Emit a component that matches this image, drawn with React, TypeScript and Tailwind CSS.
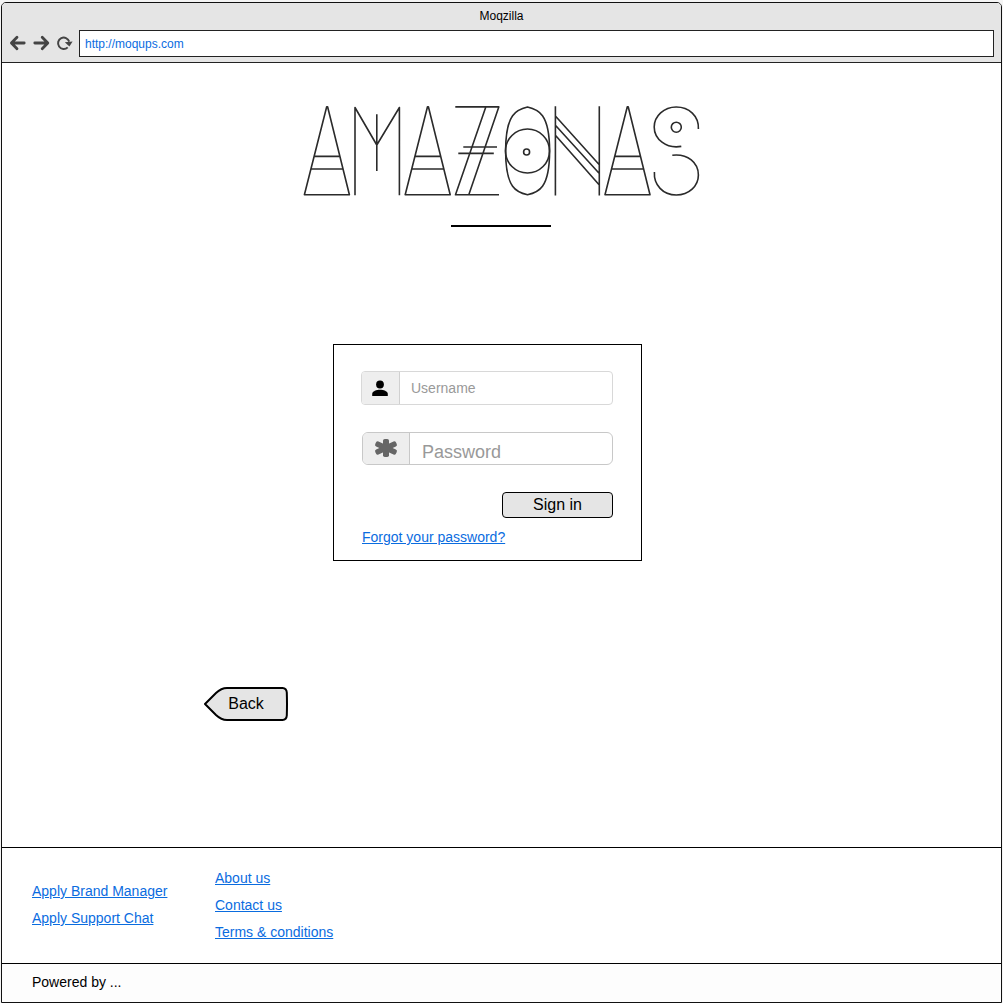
import React from 'react';

const letterA = (x: number) => (
  <path d={`M${x + 22.3} 106.8h.9L${x + 45} 194.7H${x}zM${x + 9.8} 156.4H${x + 35.2}M${x + 6.6} 169H${x + 38.4}`} />
);

function Logo() {
  return (
    <svg
      className="mt-[41px] ml-[300px] block h-[94px] w-[402px]"
      viewBox="302 104 402 94"
      fill="none"
      stroke="#2b2b2b"
      strokeWidth="1.6"
      strokeLinejoin="round"
      role="img"
      aria-label="Amazonas"
    >
      {letterA(304.4)}
      <path d="M355 195.3V107.5L376.8 145 399.4 107.5V195.3M376.8 114.3V171" />
      {letterA(405.2)}
      <path d="M455.3 106.9H498.8L468.8 194.7M485.8 106.9L455.5 194.7H499M463.3 147H497M458.3 153.4H493.8" />
      <path d="M527.5 107C538 109.5 549.6 113 549.6 151C549.6 189 538 192.5 527.5 194.8C517 192.5 505.6 189 505.6 151C505.6 113 517 109.5 527.5 107Z" />
      <circle cx="527.5" cy="151" r="22" />
      <circle cx="526.6" cy="152" r="3" />
      <path d="M555.4 106.3V195.5M599.3 106.3V195.5M555.4 116L599.3 164.7M555.4 125.3L599.3 173.5M555.4 135.3L599.3 185" />
      {letterA(605)}
      <path d="M698.4 129C699 116 689 107 676.2 107C664 107 654.2 116 654.2 127C654.2 139 666 149 681.3 146.4" />
      <circle cx="676.3" cy="127.2" r="5" />
      <path d="M672.3 155.3C688 153.5 698.4 163 698.4 175C698.4 186 689 195 676.3 195C663 195 653.6 185 654.4 172" />
    </svg>
  );
}

function Link({ children }: { children: React.ReactNode }) {
  return (
    <a href="#" className="block w-fit text-sm leading-[27px] whitespace-nowrap text-[#0a6cdf] underline underline-offset-1">
      {children}
    </a>
  );
}

export default function App() {
  return (
    <div className="h-[1003px] w-[1003px] bg-[#f4f4f4] pt-[2px] pl-px font-['Liberation_Sans',Arial,sans-serif] text-black">
      <div className="flex h-[1001px] w-[1001px] flex-col overflow-hidden rounded-t-[5px] border border-[#111] bg-white">
        <header className="h-[60px] shrink-0 border-b border-[#222] bg-[#e5e5e5]">
          <div className="h-[27px] text-center text-xs leading-[26px]">Moqzilla</div>
          <div className="flex h-[27px] items-center">
            <svg className="ml-[7px] h-[27px] w-[64px]" viewBox="9 30 64 27" fill="none" stroke="#444" strokeWidth="2.8">
              <path
                strokeLinecap="round"
                strokeLinejoin="round"
                d="M24.2 43H12M17 37.2L11.4 43L17 48.8M34.8 43H47M42.2 37.2L47.8 43L42.2 48.8"
              />
              <path d="M67.7 47.4A5.7 5.7 0 1 1 69.2 41.6" strokeWidth="2" />
              <path d="M64.8 42.2L72.6 41.4L69.4 46.6Z" fill="#444" stroke="none" />
            </svg>
            <div className="ml-[6px] h-[27px] w-[915px] border border-[#222] bg-white pl-[5px] text-xs leading-[27px] text-[#0a6cdf]">
              http://moqups.com
            </div>
          </div>
        </header>

        <main className="h-[784px] shrink-0">
          <Logo />
          <div className="mt-[27px] ml-[449px] h-[2px] w-[100px] bg-black" />

          <form className="mt-[117px] ml-[331px] h-[217px] w-[309px] border border-black pt-[26px] pl-[27px]">
            <div className="flex h-[34px] w-[252px] overflow-hidden rounded-[4px] border border-[#d8d8d8]">
              <div className="w-[38px] border-r border-[#d0d0d0] bg-[#eee]">
                <svg className="h-[32px] w-[37px]" viewBox="0 0 37 32">
                  <circle cx="18" cy="12.5" r="3.9" />
                  <path d="M10.2 23.9V22C10.2 19.2 14.6 17.8 18 17.8S25.8 19.2 25.8 22V23.9Z" />
                </svg>
              </div>
              <div className="pl-[11px] text-sm leading-[33px] text-[#999]">Username</div>
            </div>
            <div className="mt-[27px] ml-px flex h-[33px] w-[251px] overflow-hidden rounded-[6px] border border-[#c8c8c8]">
              <div className="w-[47px] border-r border-[#c8c8c8] bg-[#eee]">
                <svg className="h-[31px] w-[46px]" viewBox="0 0 46 31" fill="#666">
                  <rect x="20" y="6" width="6" height="18" rx="1.8" />
                  <rect x="20.2" y="3.6" width="5.6" height="22.8" rx="1.8" transform="rotate(65 23 15)" />
                  <rect x="20.2" y="3.6" width="5.6" height="22.8" rx="1.8" transform="rotate(-65 23 15)" />
                </svg>
              </div>
              <div className="pl-[12px] text-lg leading-[38px] text-[#999]">Password</div>
            </div>
            <button type="button" className="mt-[27px] ml-[141px] block h-[26px] w-[111px] rounded-[4px] border border-black bg-[#e5e5e5] text-base leading-[24px]">
              Sign in
            </button>
            <div className="mt-[6px] ml-px">
              <Link>Forgot your password?</Link>
            </div>
          </form>

          <button type="button" className="mt-[123px] ml-[200px] grid h-[38px] w-[88px] place-items-center">
            <svg className="col-start-1 row-start-1 h-[36px] w-[88px]" viewBox="0 0 88 36" fill="#e5e5e5" stroke="#000" strokeWidth="2" strokeLinejoin="round">
              <path d="M3 19L14 8C18 4.2 20.5 3 25 3H80.5Q84.5 3.2 84.8 7.5Q85.2 19 84.8 30.5Q84.5 34.8 80.5 35H25C20.5 35 18 33.8 14 30Z" />
            </svg>
            <span className="col-start-1 row-start-1 pt-[2px] text-base leading-[36px]">Back</span>
          </button>
        </main>

        <footer className="flex grow flex-col border-t border-black">
          <div className="flex h-[115px] shrink-0 pl-[30px]">
            <nav className="w-[183px] pt-[30px]">
              <Link>Apply Brand Manager</Link>
              <Link>Apply Support Chat</Link>
            </nav>
            <nav className="pt-[17px]">
              <Link>About us</Link>
              <Link>Contact us</Link>
              <Link>Terms &amp; conditions</Link>
            </nav>
          </div>
          <div className="grow border-t border-black bg-[#fdfdfd] pl-[30px] text-sm leading-[36px]">Powered by ...</div>
        </footer>
      </div>
    </div>
  );
}
